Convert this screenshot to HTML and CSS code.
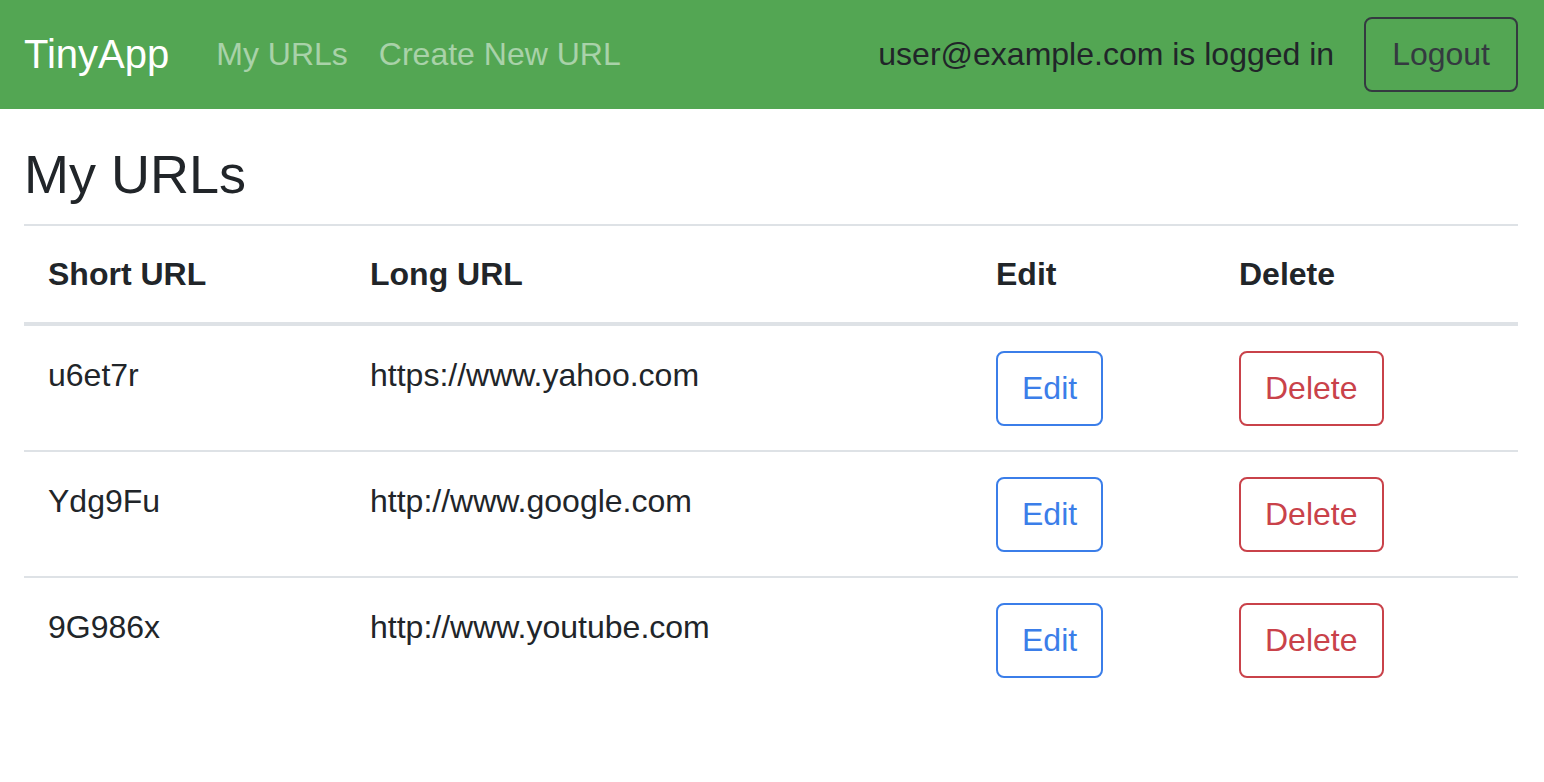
FILE: index.html
```html
<!DOCTYPE html>
<html lang="en">
<head>
<meta charset="utf-8">
<title>TinyApp</title>
<link rel="stylesheet" href="styles.css">
</head>
<body>
<nav class="navbar">
  <a class="brand" href="#">TinyApp</a>
  <ul class="nav-links">
    <li><a href="#">My URLs</a></li>
    <li><a href="#">Create New URL</a></li>
  </ul>
  <div class="nav-right">
    <span class="user">user@example.com is logged in</span>
    <button class="btn btn-dark">Logout</button>
  </div>
</nav>
<main class="container">
  <h1 class="title">My URLs</h1>
  <table class="table">
    <colgroup>
      <col class="c-short">
      <col class="c-long">
      <col class="c-edit">
      <col class="c-del">
    </colgroup>
    <thead>
      <tr><th>Short URL</th><th>Long URL</th><th>Edit</th><th>Delete</th></tr>
    </thead>
    <tbody>
      <tr>
        <td>u6et7r</td><td>https://www.yahoo.com</td>
        <td><button class="btn btn-primary">Edit</button></td>
        <td><button class="btn btn-danger">Delete</button></td>
      </tr>
      <tr>
        <td>Ydg9Fu</td><td>http://www.google.com</td>
        <td><button class="btn btn-primary">Edit</button></td>
        <td><button class="btn btn-danger">Delete</button></td>
      </tr>
      <tr>
        <td>9G986x</td><td>http://www.youtube.com</td>
        <td><button class="btn btn-primary">Edit</button></td>
        <td><button class="btn btn-danger">Delete</button></td>
      </tr>
    </tbody>
  </table>
</main>
</body>
</html>
```
FILE: styles.css
```css
* { box-sizing: border-box; }

body {
  margin: 0;
  font-family: "Liberation Sans", Arial, sans-serif;
  font-size: 32px;
  line-height: 1.5;
  color: #212529;
  background: #fff;
}

.navbar {
  display: flex;
  align-items: center;
  height: 109px;
  padding: 0 26px 1px 24px;
  background: #53a653;
}

.brand {
  font-size: 40px;
  line-height: 60px;
  color: #fff;
  text-decoration: none;
  margin-right: 31px;
}

.nav-links {
  display: flex;
  list-style: none;
  margin: 0;
  padding: 0;
}

.nav-links a {
  display: block;
  padding: 0 15px 0 16px;
  color: rgba(255, 255, 255, 0.5);
  text-decoration: none;
}

.nav-right {
  margin-left: auto;
  display: flex;
  align-items: center;
  gap: 30px;
}

.user { color: #212529; }

.btn {
  font-family: inherit;
  font-size: 32px;
  line-height: 48px;
  padding: 11.5px 24px;
  border: 2px solid;
  border-radius: 8px;
  background: transparent;
  cursor: pointer;
}

.btn-dark { color: #343a40; border-color: #343a40; padding: 11.5px 26px; }
.btn-primary { color: #3b7ee9; border-color: #3b7ee9; }
.btn-danger { color: #c9424a; border-color: #c9424a; }

.container {
  padding: 0 26px 0 24px;
}

.title {
  font-size: 54px;
  font-weight: 500;
  line-height: 1.24;
  margin: 32px 0 16px;
}

.table {
  width: 100%;
  border-collapse: collapse;
  table-layout: fixed;
}

.c-short { width: 322px; }
.c-long { width: 626px; }
.c-edit { width: 243px; }
.c-del { width: 303px; }

.table th,
.table td {
  padding: 24px;
  text-align: left;
  vertical-align: top;
  border-top: 2px solid #dee2e6;
}

.table td { padding-top: 25px; padding-bottom: 24px; }

.table th {
  font-weight: bold;
  vertical-align: bottom;
  border-bottom: 4px solid #dee2e6;
}
```
